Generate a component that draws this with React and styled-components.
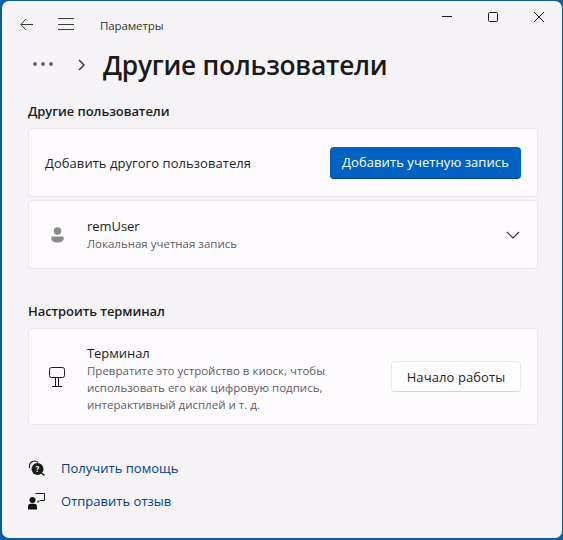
import React from 'react';
import styled, { createGlobalStyle } from 'styled-components';

const Global = createGlobalStyle`
  html, body { margin: 0; padding: 0; width: 563px; height: 540px; overflow: hidden; background: #0f5c9e; }
  * { box-sizing: border-box; }
  body { font-family: "Open Sans", "Noto Sans", sans-serif; }
`;
const Win = styled.div`
  width: 560px; height: 537px; margin: 1px 0 0 2px;
  background: #f6f3f7; border-radius: 7px;
  display: flex; flex-direction: column; color: #1b1b1b;
`;
const TitleBar = styled.header`
  height: 46px; display: flex; align-items: center; padding-left: 16px; flex: none;
`;
const NavIcon = styled.svg`
  width: 16px; height: 16px; fill: none; stroke: ${p => p.$c || '#3c3c3c'}; stroke-width: 1; flex: none;
`;
const WinIcon = styled.svg`
  width: 12px; height: 12px; fill: none; stroke: #1a1a1a; stroke-width: 1; flex: none;
`;
const AppName = styled.span`
  font-size: 11.5px; margin-left: 26px; color: #333; position: relative; top: 1px; letter-spacing: -0.1px;
`;
const WinButtons = styled.div`
  margin-left: auto; display: flex; align-items: center; margin-top: -15px; padding-right: 17px; gap: 34px;
`;
const Crumb = styled.div`
  height: 36px; display: flex; align-items: center; padding-left: 31px; flex: none;
`;
const Dots = styled.div`
  display: flex; gap: 4px; width: 22px; margin-top: -3px;
  i { width: 4px; height: 4px; border-radius: 50%; background: #6a6a6a; display: block; }
`;
const PageTitle = styled.h1`
  margin: 0 0 0 13px; font-size: 26.3px; font-weight: 600; color: #1a1a1a; letter-spacing: -0.25px; line-height: 36px;
`;
const Content = styled.main`
  padding: 19px 24px 0 26px; display: flex; flex-direction: column; flex: 1;
`;
const SectionTitle = styled.h2`
  margin: 0 0 ${p => p.$mb || 0}px; font-size: 13px; font-weight: 600; line-height: 18px; color: #1c1c1c; height: ${p => p.$h || 26}px; letter-spacing: -0.08px;
`;
const Card = styled.section`
  background: #fdfbfe; border: 1px solid #e9e7ea; border-radius: 4px;
  height: ${p => p.$h}px; margin-bottom: ${p => p.$mb || 0}px;
  display: flex; align-items: center; padding: 0 16px 0 ${p => p.$pl || 16}px; flex: none;
`;
const RowLabel = styled.span`
  font-size: 13px; color: #1f1f1f; letter-spacing: 0.05px;
`;
const Primary = styled.button`
  margin-left: auto; width: 191px; height: 32px; border: none; border-bottom: 1px solid #00417f; border-radius: 4px;
  background: #0063c4; color: #fff; font: 400 13px "Open Sans", sans-serif; letter-spacing: 0.08px; padding: 0;
`;
const Secondary = styled.button`
  margin-left: auto; width: 130px; height: 31px; border: 1px solid #ebe9ec; border-bottom-color: #d5d3d6; border-radius: 4px;
  background: #fefdfe; color: #1f1f1f; font: 400 13px "Open Sans", sans-serif; letter-spacing: 0.1px; padding: 0;
`;
const IconSlot = styled.div`
  width: ${p => p.$w || 38}px; flex: none; display: flex; align-items: center;
`;
const Info = styled.div`
  display: flex; flex-direction: column; padding-top: ${p => p.$pt || 0}px;
`;
const InfoTitle = styled.div`
  font-size: 13px; line-height: 18px; color: #1b1b1b; letter-spacing: -0.05px;
`;
const InfoSub = styled.div`
  font-size: 11.5px; line-height: 17px; color: #5d5d5d; width: ${p => p.$w || 'auto'}; letter-spacing: 0;
`;
const Links = styled.nav`
  margin-top: 33px; display: flex; flex-direction: column; gap: 13px;
`;
const LinkRow = styled.div`
  display: flex; align-items: center; height: 20px;
`;
const LinkIcon = styled.div`
  width: 33px; flex: none; display: flex;
`;
const Link = styled.a`
  font-size: 13px; color: #003e92; letter-spacing: 0.02px;
`;

export default function App() {
  return (
    <>
      <Global />
      <Win>
        <TitleBar>
          <NavIcon viewBox="0 0 16 16" style={{ marginLeft: 1 }}><path d="M14 8.5H2M7 3 1.8 8.5 7 14" /></NavIcon>
          <NavIcon viewBox="0 0 16 16" style={{ marginLeft: 23 }}><path d="M0 2.5h16M0 8.5h16M0 13.5h16" /></NavIcon>
          <AppName>Параметры</AppName>
          <WinButtons>
            <WinIcon viewBox="0 0 12 12"><path d="M1 5.5h10" /></WinIcon>
            <WinIcon viewBox="0 0 12 12"><rect x="1.5" y="1.5" width="9" height="9" rx="1" /></WinIcon>
            <WinIcon viewBox="0 0 12 12"><path d="M1 1l10 10M11 1 1 11" /></WinIcon>
          </WinButtons>
        </TitleBar>
        <Crumb>
          <Dots><i /><i /><i /></Dots>
          <NavIcon viewBox="0 0 16 16" style={{ marginLeft: 19, strokeWidth: 1.5 }}><path d="M5 3l5 5-5 5" /></NavIcon>
          <PageTitle>Другие пользователи</PageTitle>
        </Crumb>
        <Content>
          <SectionTitle>Другие пользователи</SectionTitle>
          <Card $h={69} $mb={3}>
            <RowLabel>Добавить другого пользователя</RowLabel>
            <Primary>Добавить учетную запись</Primary>
          </Card>
          <Card $h={69} $mb={33} $pl={22}>
            <IconSlot $w={36}>
              <svg width="13" height="16" viewBox="0 0 13 16" fill="#8b8b8b">
                <circle cx="6.5" cy="4" r="3.8" />
                <path d="M0.2 11c0-1 .8-1.6 1.8-1.6h9c1 0 1.8.6 1.8 1.6 0 3-2.8 4.6-6.3 4.6S.2 14 .2 11z" />
              </svg>
            </IconSlot>
            <Info>
              <InfoTitle>remUser</InfoTitle>
              <InfoSub>Локальная учетная запись</InfoSub>
            </Info>
            <NavIcon $c="#333" viewBox="0 0 16 16" style={{ marginLeft: 'auto', strokeWidth: 1.2 }}><path d="M2 5l6 6 6-6" /></NavIcon>
          </Card>
          <SectionTitle $h={17} $mb={9}>Настроить терминал</SectionTitle>
          <Card $h={97} $pl={20}>
            <IconSlot>
              <svg width="16" height="20" viewBox="0 0 16 20" fill="none" stroke="#1b1b1b" strokeWidth="1">
                <rect x="0.5" y="0.5" width="15" height="10" rx="2" />
                <path d="M6.5 11v8M9.5 11v8M3 19.5h10" />
              </svg>
            </IconSlot>
            <Info $pt={3}>
              <InfoTitle>Терминал</InfoTitle>
              <InfoSub $w="272px">Превратите это устройство в киоск, чтобы использовать его как цифровую подпись, интерактивный дисплей и т. д.</InfoSub>
            </Info>
            <Secondary>Начало работы</Secondary>
          </Card>
          <Links>
            <LinkRow>
              <LinkIcon>
                <svg width="18" height="18" viewBox="0 0 18 18">
                  <path d="M1.5 9V7a5 5 0 0 1 8.5-3.5" fill="none" stroke="#1b1b1b" strokeWidth="1.1" />
                  <circle cx="9.5" cy="10" r="6" fill="#1b1b1b" />
                  <path d="M13.5 14l3 2.5" stroke="#1b1b1b" strokeWidth="1.6" />
                  <text x="9.5" y="13" fontSize="8" fontWeight="700" fill="#fff" textAnchor="middle" fontFamily="Open Sans">?</text>
                </svg>
              </LinkIcon>
              <Link>Получить помощь</Link>
            </LinkRow>
            <LinkRow>
              <LinkIcon>
                <svg width="18" height="18" viewBox="0 0 18 18">
                  <circle cx="4.5" cy="8" r="3" fill="#111" />
                  <path d="M0 17.5v-3c0-1.6 1-2.8 2.6-2.8h3.8c1.6 0 2.6 1.2 2.6 2.8v3z" fill="#111" />
                  <path d="M7.5 1.5h9V8.5h-4.5L10 10.5V8.5" fill="none" stroke="#1b1b1b" strokeWidth="1" />
                </svg>
              </LinkIcon>
              <Link>Отправить отзыв</Link>
            </LinkRow>
          </Links>
        </Content>
      </Win>
    </>
  );
}
